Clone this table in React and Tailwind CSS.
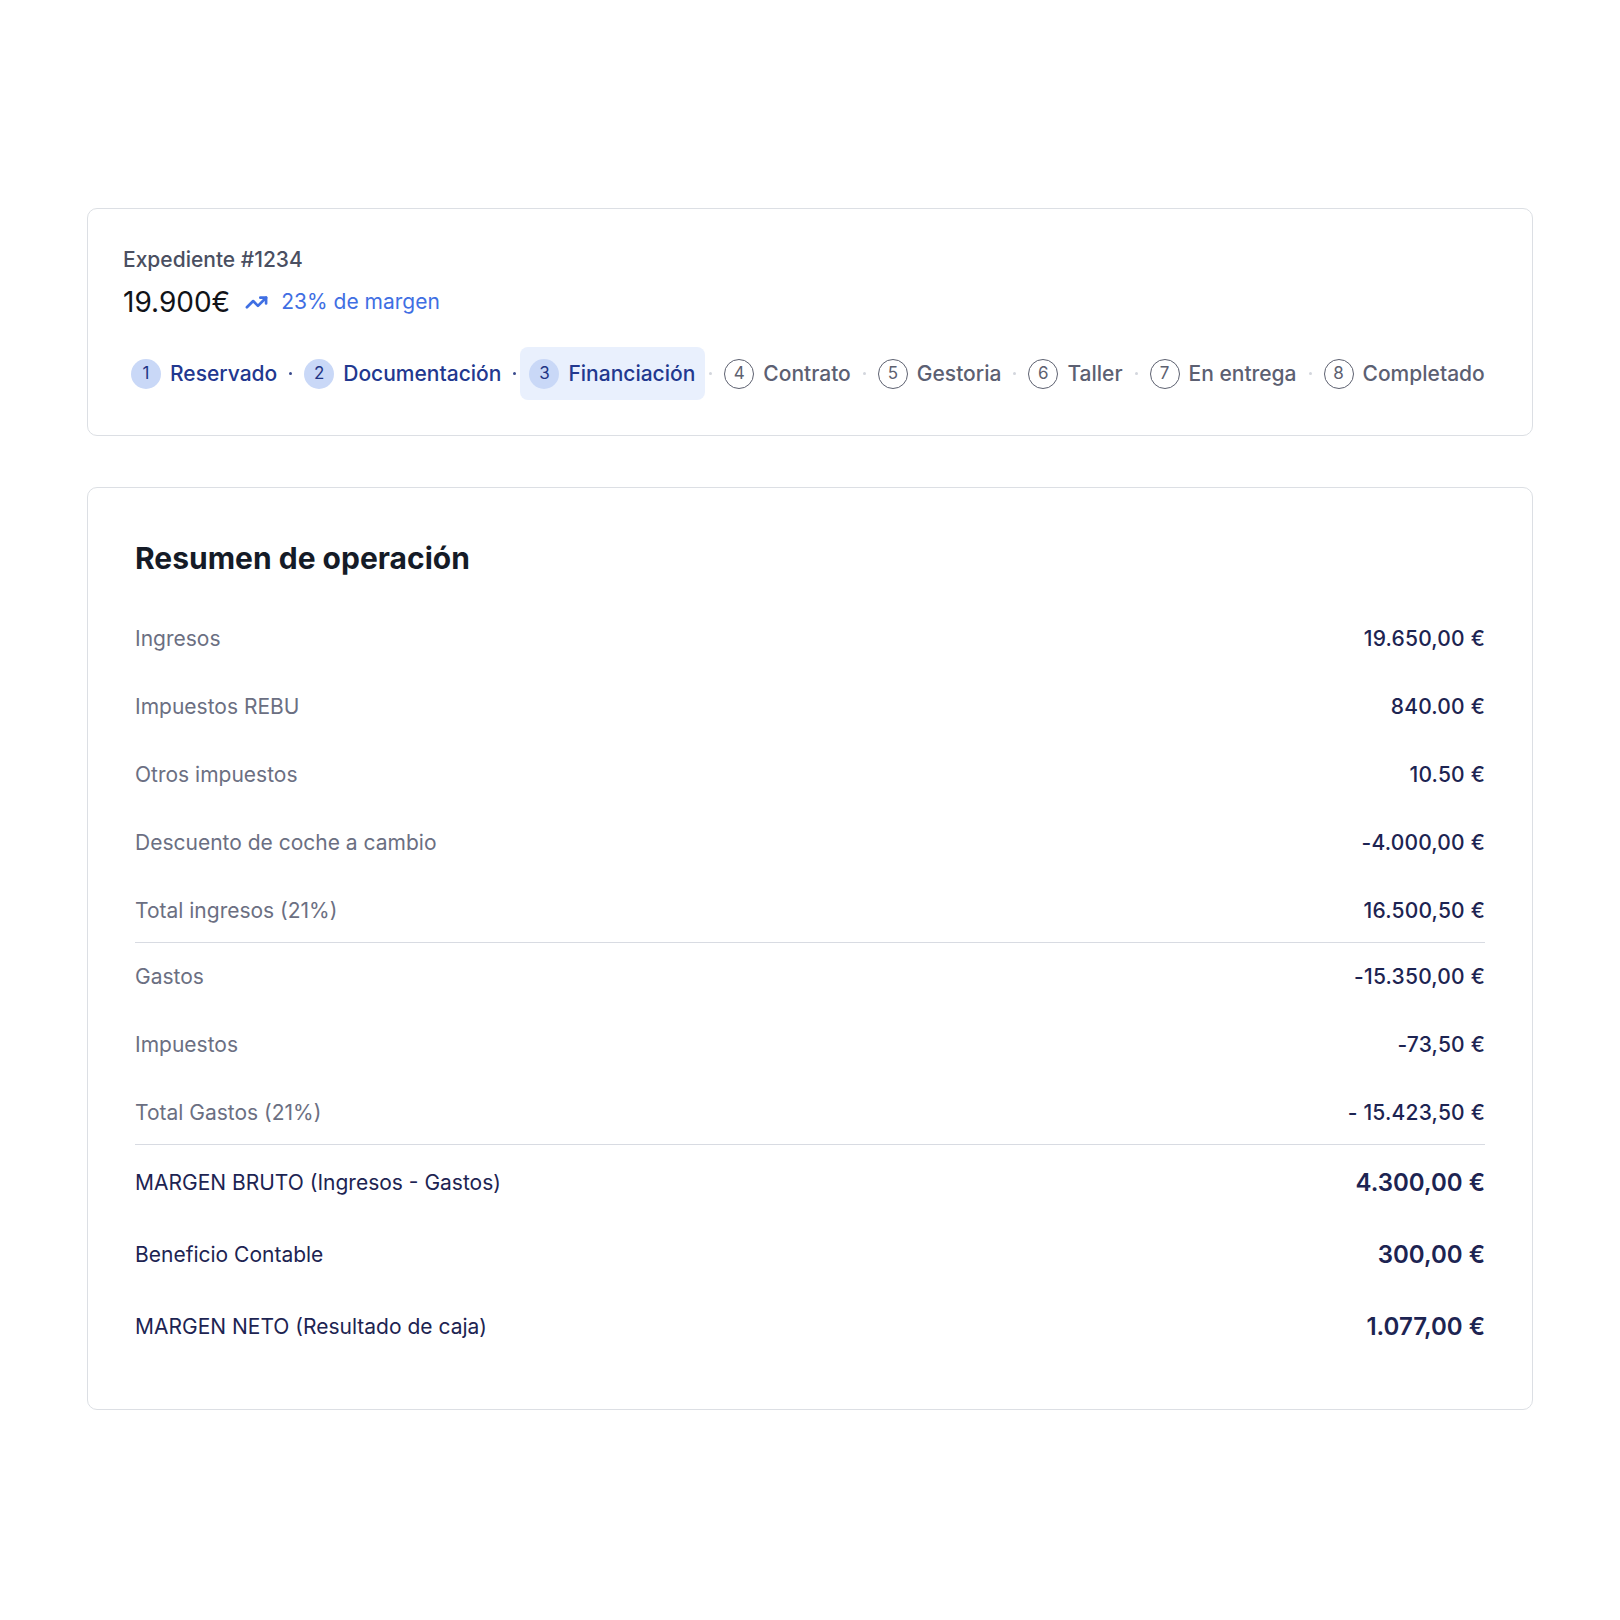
import React from "react";
import { TrendingUp } from "lucide-react";

const steps = [
  { n: 1, label: "Reservado", state: "done" },
  { n: 2, label: "Documentación", state: "done" },
  { n: 3, label: "Financiación", state: "active" },
  { n: 4, label: "Contrato", state: "todo" },
  { n: 5, label: "Gestoria", state: "todo" },
  { n: 6, label: "Taller", state: "todo" },
  { n: 7, label: "En entrega", state: "todo" },
  { n: 8, label: "Completado", state: "todo" },
];

const group1 = [
  ["Ingresos", "19.650,00 €"],
  ["Impuestos REBU", "840.00 €"],
  ["Otros impuestos", "10.50 €"],
  ["Descuento de coche a cambio", "-4.000,00 €"],
  ["Total ingresos (21%)", "16.500,50 €"],
];
const group2 = [
  ["Gastos", "-15.350,00 €"],
  ["Impuestos", "-73,50 €"],
  ["Total Gastos (21%)", "- 15.423,50 €"],
];
const group3 = [
  ["MARGEN BRUTO (Ingresos - Gastos)", "4.300,00 €"],
  ["Beneficio Contable", "300,00 €"],
  ["MARGEN NETO (Resultado de caja)", "1.077,00 €"],
];

function Step({ n, label, state }) {
  const active = state === "active";
  const done = state === "done" || active;
  return (
    <div
      className={
        "flex h-[53px] items-center gap-[9px] rounded-lg pl-2 pr-2 " +
        (active ? "bg-[#e9f0fd] pl-[9px] pr-[10px]" : "")
      }
    >
      {done ? (
        <span className="flex h-[30px] w-[30px] items-center justify-center rounded-full bg-[#c9d8f7] text-[17px] text-[#1f3585]">
          {n}
        </span>
      ) : (
        <span className="flex h-[30px] w-[30px] items-center justify-center rounded-full border-[1.5px] border-[#5d6170] text-[17px] text-[#5d6170]">
          {n}
        </span>
      )}
      <span
        className={
          "text-[21px] font-medium leading-7 " +
          (done ? "text-[#22388f]" : "text-[#5c6072]")
        }
      >
        {label}
      </span>
    </div>
  );
}

function Row({ label, value, last }) {
  return (
    <div
      className={
        "flex items-center justify-between " +
        (last ? "h-[66px] border-b border-[#d8dbe2] pt-[2px]" : "h-[68px]")
      }
    >
      <span className="text-[21px] text-[#6b6f82]">{label}</span>
      <span className="text-[21px] font-medium tracking-[0.2px] text-[#1d2452]">
        {value}
      </span>
    </div>
  );
}

export default function App() {
  return (
    <div
      className="min-h-[1620px] w-[1620px] bg-white pt-[208px]"
      style={{ fontFamily: "Inter, 'Noto Sans', sans-serif" }}
    >
      <div className="mx-[87px] flex flex-col gap-[51px]">
        {/* Card 1 */}
        <div className="rounded-[10px] border border-[#dcdfe4] pb-[35px] pl-[35px] pr-[35px] pt-[37px]">
          <div className="text-[21px] font-medium leading-7 text-[#4a4f61]">
            Expediente #1234
          </div>
          <div className="mt-[10px] flex h-9 items-center">
            <span className="text-[28px] leading-9 text-[#111318]">19.900€</span>
            <TrendingUp
              className="ml-[15px] h-[23px] w-[23px] text-[#3f6fe3]"
              strokeWidth={2.8}
            />
            <span className="ml-[13px] text-[21px] text-[#3f6fe3]">
              23% de margen
            </span>
          </div>
          <div className="mt-[27px] flex items-center">
            {steps.map((s, i) => (
              <React.Fragment key={s.n}>
                <Step {...s} />
                {i < steps.length - 1 && (
                  <span
                    className={
                      "mx-[4px] h-[3px] w-[3px] rounded-full " +
                      (i < 2 ? "bg-[#3a4a8c]" : "bg-[#d3d6dd]")
                    }
                  />
                )}
              </React.Fragment>
            ))}
          </div>
        </div>

        {/* Card 2 */}
        <div className="rounded-[10px] border border-[#dcdfe4] px-[47px] pb-[46px] pt-[52px]">
          <h2 className="text-[30px] font-bold leading-9 text-[#151b27]">
            Resumen de operación
          </h2>
          <div className="mt-[29px]">
            {group1.map(([l, v], i) => (
              <Row key={l} label={l} value={v} last={i === group1.length - 1} />
            ))}
            {group2.map(([l, v], i) => (
              <Row key={l} label={l} value={v} last={i === group2.length - 1} />
            ))}
            <div className="h-[2px]" />
            {group3.map(([l, v]) => (
              <div key={l} className="flex h-[72px] items-center justify-between">
                <span className="text-[21px] text-[#1d2452]">{l}</span>
                <span className="text-[24px] font-semibold text-[#1d2452]">
                  {v}
                </span>
              </div>
            ))}
          </div>
        </div>
      </div>
    </div>
  );
}
